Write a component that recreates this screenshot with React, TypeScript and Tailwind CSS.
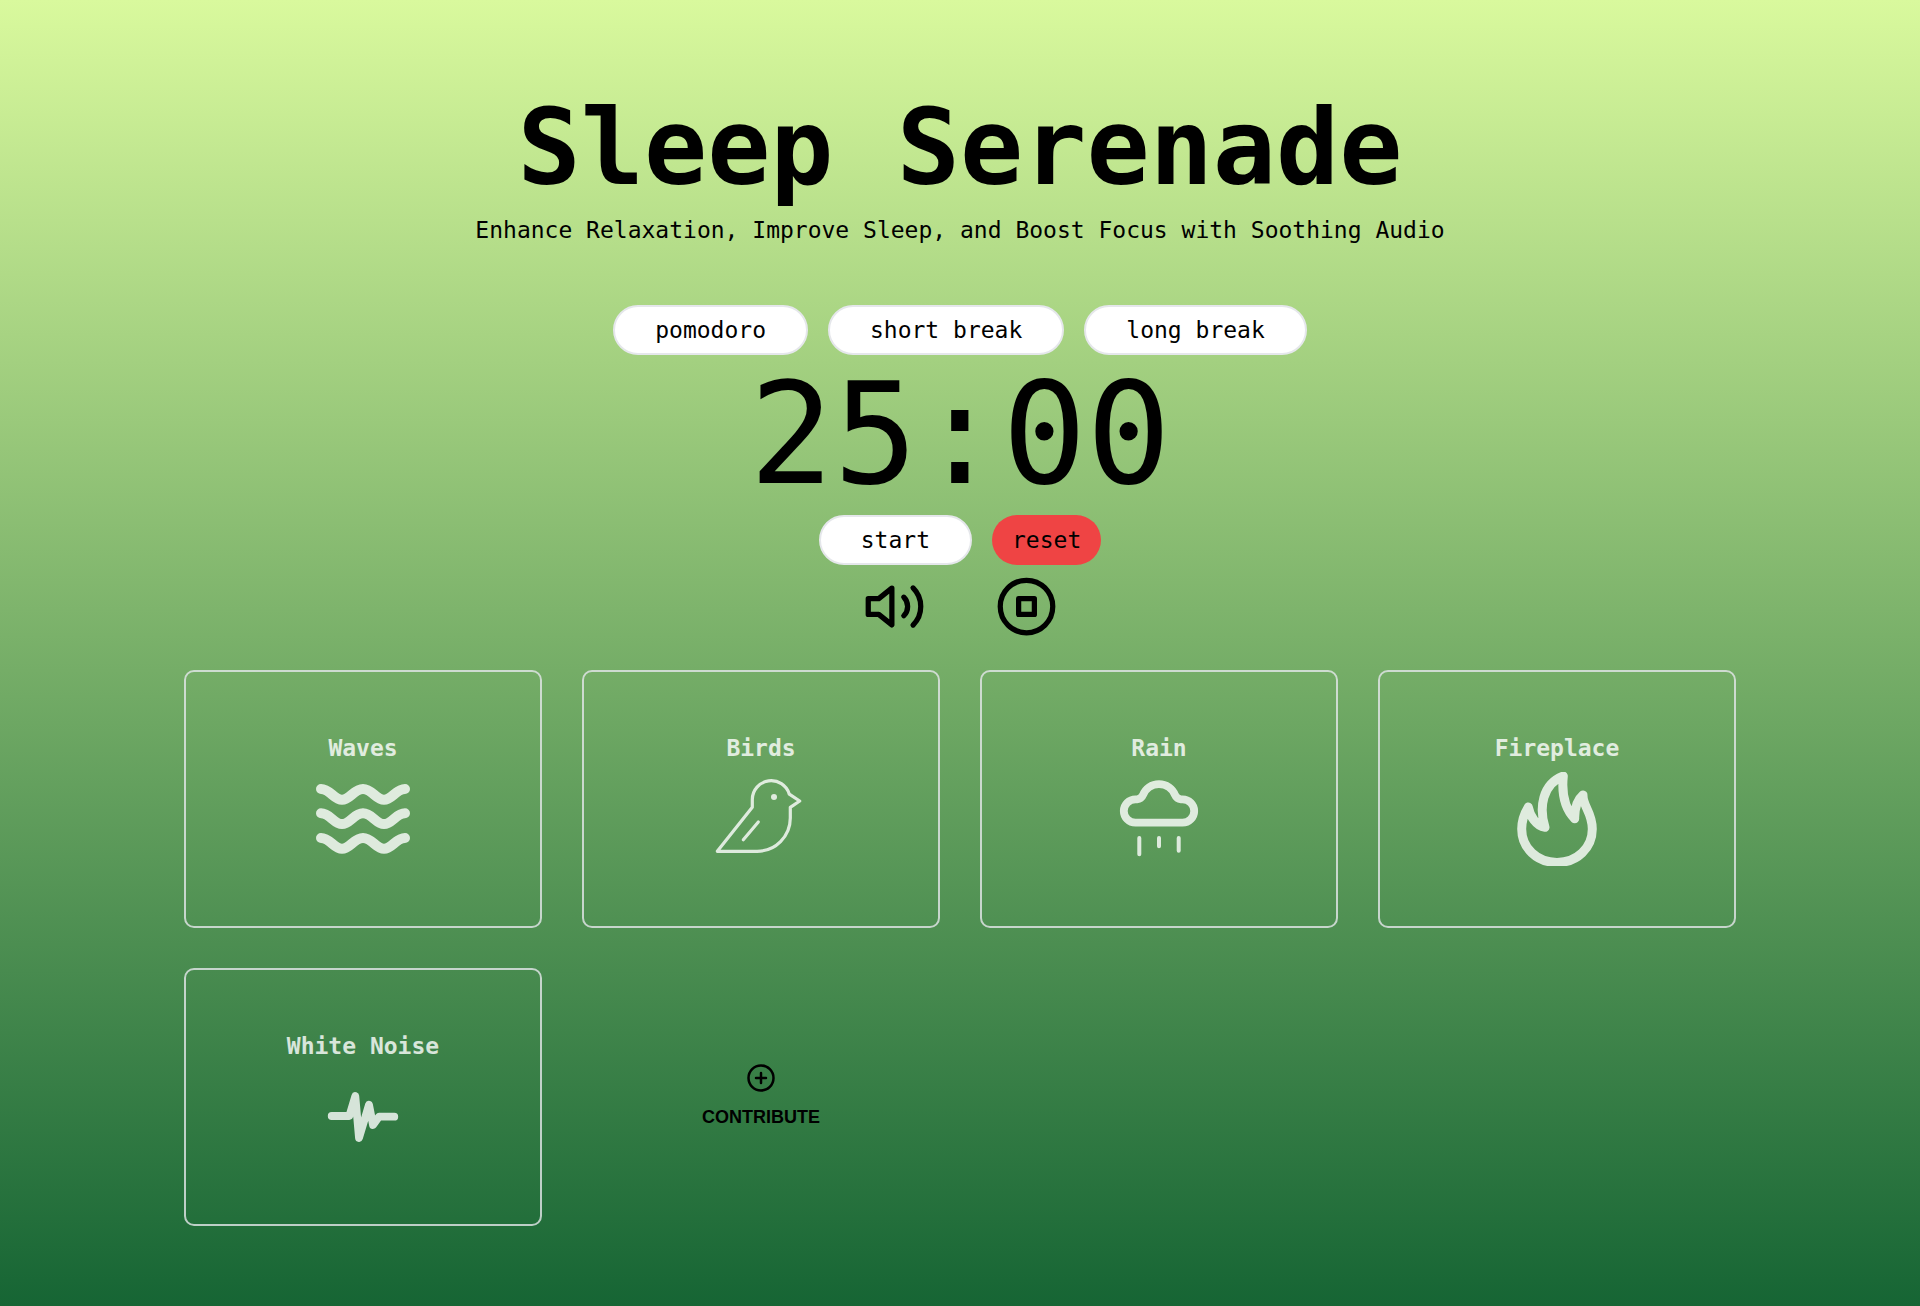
import { useEffect, useState } from 'react';
import type { ReactNode } from 'react';

const MODES = [
  { label: 'pomodoro', minutes: 25 },
  { label: 'short break', minutes: 5 },
  { label: 'long break', minutes: 15 },
];

const PILL =
  'h-[50px] cursor-pointer rounded-full border-2 border-gray-200 bg-white px-10 text-[23px] leading-8 font-medium';

function SoundIcon({ stroke, children }: { stroke: number; children: ReactNode }) {
  return (
    <svg
      className="size-[94px]"
      viewBox="0 0 94 94"
      fill="none"
      stroke="currentColor"
      strokeWidth={stroke}
      strokeLinecap="round"
      strokeLinejoin="round"
      aria-hidden="true"
    >
      {children}
    </svg>
  );
}

function LineIcon({ className, children }: { className: string; children: ReactNode }) {
  return (
    <svg
      className={className}
      viewBox="0 0 24 24"
      fill="none"
      stroke="currentColor"
      strokeWidth={2}
      strokeLinecap="round"
      strokeLinejoin="round"
      aria-hidden="true"
    >
      {children}
    </svg>
  );
}

const SOUNDS: { name: string; icon: ReactNode }[] = [
  {
    name: 'Waves',
    icon: (
      <SoundIcon stroke={10}>
        <path d="M5 17C14 17 18 27.8 26 27.8S38 17 47 17s13 10.8 21 10.8S80 17 89 17" />
        <path d="M5 41.3C14 41.3 18 52.1 26 52.1S38 41.3 47 41.3s13 10.8 21 10.8S80 41.3 89 41.3" />
        <path d="M5 66C14 66 18 76.8 26 76.8S38 66 47 66s13 10.8 21 10.8S80 66 89 66" />
      </SoundIcon>
    ),
  },
  {
    name: 'Birds',
    icon: (
      <SoundIcon stroke={3.2}>
        <path d="M3.3 79.3 38.3 35.3V27.4a18.9 18.9 0 0 1 37-5.2L85.7 29l-9.4 6.3V46c0 18.4-14.9 33.3-33.3 33.3Z" />
        <path d="M44.3 50 29.3 67.7" />
        <circle cx="60" cy="25" r="3" fill="currentColor" stroke="none" />
      </SoundIcon>
    ),
  },
  {
    name: 'Rain',
    icon: (
      <SoundIcon stroke={7.8}>
        <path d="M23.5 50.7a11.7 11.7 0 0 1 0-23.4H25q4.3-.3 5.8-4a17.3 17.3 0 0 1 32.4 0q1.5 3.7 5.8 4h1.5a11.7 11.7 0 0 1 0 23.4Z" />
        <path strokeWidth={4} d="M27.3 66v16.3M47 66v8.3M66.7 66v12.7" />
      </SoundIcon>
    ),
  },
  {
    name: 'Fireplace',
    icon: (
      <SoundIcon stroke={9}>
        <path d="M47 90.5C27 90.5 11.7 76 11.7 57c0-8 2.3-15 6.6-22C20 44 26 54 35 55.3 29 36 32 12 53.3 4c-1.8 18 .7 32 11.4 42.7C64.5 37 66 29 73 23c-.5 11 9.3 17 9.3 34 0 19-15.3 33.5-35.3 33.5Z" />
      </SoundIcon>
    ),
  },
  {
    name: 'White Noise',
    icon: (
      <SoundIcon stroke={7.8}>
        <path d="M15.7 46h17.6l6-20L43 68l10-33.3L57 55l6-8.3h15.3" />
      </SoundIcon>
    ),
  },
];

export default function App() {
  const [minutes, setMinutes] = useState(25);
  const [seconds, setSeconds] = useState(25 * 60);
  const [running, setRunning] = useState(false);

  useEffect(() => {
    if (!running) return;
    const id = setInterval(() => setSeconds((s) => Math.max(0, s - 1)), 1000);
    return () => clearInterval(id);
  }, [running]);

  const select = (m: number) => {
    setMinutes(m);
    setSeconds(m * 60);
    setRunning(false);
  };

  const clock = `${String(Math.floor(seconds / 60)).padStart(2, '0')}:${String(seconds % 60).padStart(2, '0')}`;

  return (
    <main className="flex min-h-screen flex-col items-center bg-[linear-gradient(to_bottom,#d9f99d,#166534)] px-46 pt-22 pb-20 font-['DejaVu_Sans_Mono',monospace] text-black">
      <h1 className="text-center text-[105px] leading-[120px] font-bold">Sleep Serenade</h1>
      <p className="mt-[6px] text-center text-[23px] leading-8">
        Enhance Relaxation, Improve Sleep, and Boost Focus with Soothing Audio
      </p>

      <div className="mt-[59px] flex flex-wrap justify-center gap-5">
        {MODES.map((mode) => (
          <button key={mode.label} type="button" className={PILL} onClick={() => select(mode.minutes)}>
            {mode.label}
          </button>
        ))}
      </div>

      <div role="timer" className="text-[140px] leading-[160px]">
        {clock}
      </div>

      <div className="flex gap-5">
        <button type="button" className={PILL} onClick={() => setRunning(!running)}>
          {running ? 'pause' : 'start'}
        </button>
        <button
          type="button"
          className="h-[50px] cursor-pointer rounded-full bg-[#ef4444] px-5 text-[23px] leading-8 font-medium"
          onClick={() => select(minutes)}
        >
          reset
        </button>
      </div>

      <div className="mt-[10px] flex gap-[69px]">
        <button type="button" aria-label="Volume" className="cursor-pointer">
          <LineIcon className="size-[63px]">
            <polygon points="11 5 6 9 2 9 2 15 6 15 11 19 11 5" />
            <path d="M15.54 8.46a5 5 0 0 1 0 7.07" />
            <path d="M19.07 4.93a10 10 0 0 1 0 14.14" />
          </LineIcon>
        </button>
        <button type="button" aria-label="Stop all sounds" className="cursor-pointer">
          <LineIcon className="size-[63px]">
            <circle cx="12" cy="12" r="10" />
            <rect x="9" y="9" width="6" height="6" />
          </LineIcon>
        </button>
      </div>

      <div className="mt-8 grid w-full grid-cols-1 gap-10 md:grid-cols-2 xl:grid-cols-4">
        {SOUNDS.map((sound) => (
          <button
            key={sound.name}
            type="button"
            className="flex h-[258px] cursor-pointer flex-col items-center justify-center gap-2 rounded-[10px] border-2 border-gray-200 text-white opacity-80"
          >
            <span className="text-[23px] leading-8 font-bold">{sound.name}</span>
            {sound.icon}
          </button>
        ))}
        <a
          href="#contribute"
          className="flex h-[258px] flex-col items-center justify-center gap-[10px] font-['Liberation_Sans',sans-serif] text-lg font-bold"
        >
          <LineIcon className="size-[30px]">
            <circle cx="12" cy="12" r="10" />
            <path d="M8 12h8M12 8v8" />
          </LineIcon>
          CONTRIBUTE
        </a>
      </div>
    </main>
  );
}
